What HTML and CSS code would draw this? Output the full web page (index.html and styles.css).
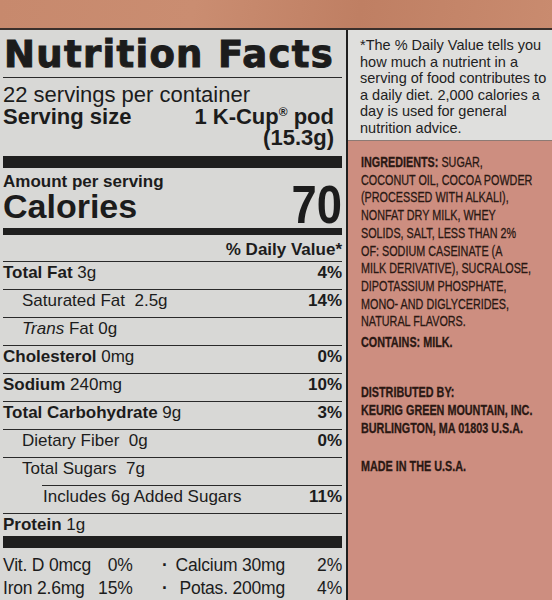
FILE: index.html
```html
<!DOCTYPE html>
<html lang="en">
<head>
    <meta charset="UTF-8">
    <meta name="viewport" content="width=device-width, initial-scale=1.0">
    <title>Nutrition Facts</title>
    <link rel="stylesheet" href="styles.css">
</head>
<body>

<div class="band"></div>

<div class="label">
    <section class="facts">
        <h1>Nutrition Facts</h1>

        <div class="servings">
            <p>22 servings per container</p>
            <div class="serving-size">
                <strong>Serving size</strong>
                <strong class="size">1 K-Cup<span class="reg">®</span> pod<br>(15.3g)</strong>
            </div>
        </div>

        <div class="bar thick"></div>

        <div class="calories">
            <div>
                <div class="amount">Amount per serving</div>
                <div class="cal-label">Calories</div>
            </div>
            <span class="cal-value">70</span>
        </div>

        <div class="bar medium"></div>

        <div class="dv-head">% Daily Value*</div>

        <div class="row"><span><b>Total Fat</b> 3g</span><b>4%</b></div>
        <div class="row sub"><span>Saturated Fat &nbsp;2.5g</span><b>14%</b></div>
        <div class="row sub"><span><i>Trans</i> Fat 0g</span></div>
        <div class="row"><span><b>Cholesterol</b> 0mg</span><b>0%</b></div>
        <div class="row"><span><b>Sodium</b> 240mg</span><b>10%</b></div>
        <div class="row"><span><b>Total Carbohydrate</b> 9g</span><b>3%</b></div>
        <div class="row sub"><span>Dietary Fiber &nbsp;0g</span><b>0%</b></div>
        <div class="row sub"><span>Total Sugars &nbsp;7g</span></div>
        <div class="row added"><span>Includes 6g Added Sugars</span><b>11%</b></div>
        <div class="row last"><span><b>Protein</b> 1g</span></div>

        <div class="bar thick"></div>

        <div class="vitamins">
            <span>Vit. D 0mcg</span>
            <span class="pct">0%</span>
            <span class="dot">·</span>
            <span class="pct">Calcium 30mg</span>
            <span class="pct">2%</span>

            <span>Iron 2.6mg</span>
            <span class="pct">15%</span>
            <span class="dot">·</span>
            <span class="pct">Potas. 200mg</span>
            <span class="pct">4%</span>
        </div>
    </section>

    <aside class="side">
        <div class="note">
            *The % Daily Value tells you<br>
            how much a nutrient in a<br>
            serving of food contributes to<br>
            a daily diet. 2,000 calories a<br>
            day is used for general<br>
            nutrition advice.
        </div>

        <div class="side-text">
            <div class="squeeze">
                <p class="ingredients"><b>INGREDIENTS:</b> SUGAR,<br>
                COCONUT OIL, COCOA POWDER<br>
                (PROCESSED WITH ALKALI),<br>
                NONFAT DRY MILK, WHEY<br>
                SOLIDS, SALT, LESS THAN 2%<br>
                OF: SODIUM CASEINATE (A<br>
                MILK DERIVATIVE), SUCRALOSE,<br>
                DIPOTASSIUM PHOSPHATE,<br>
                MONO- AND DIGLYCERIDES,<br>
                NATURAL FLAVORS.</p>
                <p class="contains">CONTAINS: MILK.</p>
                <p class="distributed">DISTRIBUTED BY:<br>
                KEURIG GREEN MOUNTAIN, INC.<br>
                BURLINGTON, MA 01803 U.S.A.</p>
                <p class="made">MADE IN THE U.S.A.</p>
            </div>
        </div>
    </aside>
</div>

</body>
</html>
```

FILE: styles.css
```css
body {
    margin: 0;
    font-family: "Liberation Sans", Arial, sans-serif;
    color: #1c1c1c;
    background-color: #cd8e80;
    overflow: hidden;
}

.band {
    height: 28px;
    background: linear-gradient(100deg, #c7896d 0%, #ca8d71 35%, #bf7f63 65%, #c98b6f 100%);
    border-bottom: 2px solid #3b302c;
}

.label {
    display: flex;
}

.facts {
    width: 348px;
    box-sizing: border-box;
    padding: 0 4px 0 3px;
    background-color: #d8d8d6;
    border-right: 2px solid #1f1f1f;
}

h1 {
    margin: 0;
    padding: 3px 0 0 1px;
    font-family: "DejaVu Sans", sans-serif;
    font-size: 37px;
    line-height: 44px;
    font-weight: bold;
    letter-spacing: 1.3px;
    white-space: nowrap;
    -webkit-text-stroke: 1px #1c1c1c;
    border-bottom: 1px solid #2a2a2a;
}

.servings {
    padding: 6px 8px 7px 0;
    font-size: 22px;
    line-height: 21.5px;
}

.servings p {
    margin: 0;
}

.serving-size {
    display: flex;
    justify-content: space-between;
}

.size {
    text-align: right;
}

.reg {
    font-size: 12px;
    line-height: 0;
    vertical-align: 8px;
}

.bar {
    background-color: #1f1f1f;
}

.bar.thick {
    height: 12px;
}

.bar.medium {
    height: 7px;
}

.calories {
    display: flex;
    justify-content: space-between;
    align-items: flex-end;
    padding: 5px 0;
}

.amount {
    font-weight: bold;
    font-size: 17px;
    line-height: 17px;
}

.cal-label {
    font-weight: bold;
    font-size: 34px;
    line-height: 33px;
}

.cal-value {
    font-weight: bold;
    font-size: 54px;
    line-height: 38px;
    transform: scaleX(0.84);
    transform-origin: right bottom;
}

.dv-head {
    text-align: right;
    font-weight: bold;
    font-size: 17px;
    line-height: 22px;
    padding-top: 4px;
}

.row {
    display: flex;
    justify-content: space-between;
    border-top: 1px solid #2a2a2a;
    font-size: 17px;
    line-height: 22px;
    padding-bottom: 5px;
}

.row.sub {
    padding-left: 19px;
}

.row.added {
    margin-left: 39px;
    padding-left: 1px;
}

.row.last {
    padding-bottom: 0;
}

.vitamins {
    display: grid;
    grid-template-columns: max-content 1fr 43px max-content 57px;
    font-size: 17.5px;
    line-height: 23px;
    letter-spacing: -0.2px;
    white-space: nowrap;
    padding-top: 6px;
}

.vitamins .pct {
    text-align: right;
}

.vitamins .dot {
    text-align: right;
    padding-right: 8px;
    font-weight: bold;
}

.side {
    flex: 1;
    overflow: hidden;
}

.note {
    background-color: #dfdfdd;
    padding: 7px 0 4px 12px;
    font-size: 14.5px;
    line-height: 16.5px;
    white-space: nowrap;
    color: #222;
    border-bottom: 1px solid #8d7a74;
}

.side-text {
    padding: 12px 0 0 13px;
}

.squeeze {
    width: 270px;
    transform: scaleX(0.72);
    transform-origin: left top;
    white-space: nowrap;
    font-size: 15px;
    color: #2a1813;
    -webkit-text-stroke: 0.3px #2a1813;
}

.squeeze p {
    margin: 0;
}

.ingredients {
    line-height: 17.7px;
}

.contains {
    margin-top: 3px !important;
    line-height: 17.7px;
    font-weight: bold;
}

.distributed {
    margin-top: 32px !important;
    line-height: 18px;
    font-weight: bold;
}

.made {
    margin-top: 20px !important;
    line-height: 18px;
    font-weight: bold;
}
```
